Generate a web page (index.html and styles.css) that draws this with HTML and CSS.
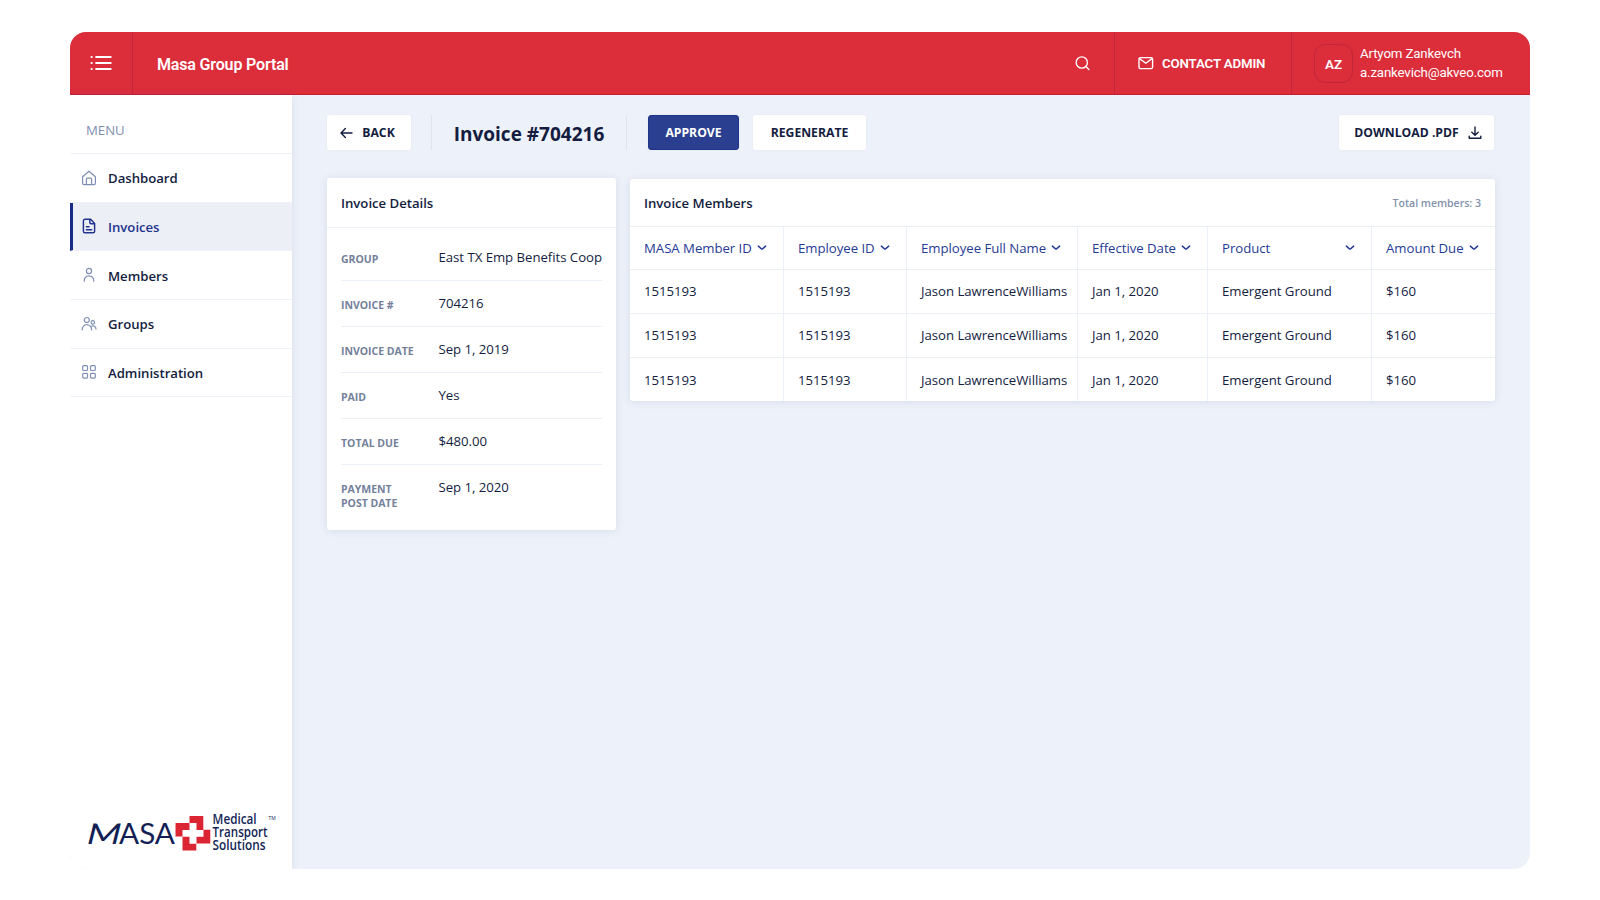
FILE: index.html
```html
<!DOCTYPE html>
<html lang="en">
  <head>
    <meta charset="UTF-8" />
    <title>Masa Group Portal</title>
    <link rel="stylesheet" href="styles.css" />
  </head>
  <body>
    <!-- arrow used in every table heading -->
    <svg width="0" height="0" class="defs">
      <symbol id="chevron" viewBox="0 0 10 6">
        <path d="M1.3 1.1L4.5 3.9Q5 4.3 5.5 3.9L8.7 1.1" />
      </symbol>
    </svg>

    <div class="app">
      <header class="header">
        <button class="menu-toggle">
          <svg width="22" height="16" viewBox="0 0 22 16">
            <path class="lines" d="M6.2 2h14.4M6.2 8h14.4M6.2 14h14.4" />
            <path class="lines" d="M1.6 2h.1M1.6 8h.1M1.6 14h.1" />
          </svg>
        </button>
        <div class="brand">Masa Group Portal</div>
        <div class="search">
          <svg width="16" height="16" viewBox="0 0 16 16">
            <circle cx="7.8" cy="7.5" r="5.6" />
            <path d="M11.9 11.6l3 2.8" />
          </svg>
        </div>
        <div class="contact">
          <svg width="16" height="14" viewBox="0 0 16 14">
            <rect x="1" y="1.6" width="13.6" height="11" rx="1.6" />
            <path d="M1.6 2.6l6.2 4.6 6.2-4.6" />
          </svg>
          <span>CONTACT ADMIN</span>
        </div>
        <div class="user">
          <div class="avatar">AZ</div>
          <div class="user-info">
            <div>Artyom Zankevch</div>
            <div>a.zankevich@akveo.com</div>
          </div>
        </div>
      </header>

      <div class="body">
        <aside class="sidebar">
          <div class="menu-title">MENU</div>
          <nav>
            <a class="menu-item">
              <svg width="16" height="16" viewBox="0 0 16 16">
                <path d="M1.6 6.8L8 1.2l6.4 5.6v6.4a1.4 1.4 0 0 1-1.4 1.4H3a1.4 1.4 0 0 1-1.4-1.4z" />
                <path d="M5.4 14.4V9.2a1 1 0 0 1 1-1h3.2a1 1 0 0 1 1 1v5.2" />
              </svg>
              <span>Dashboard</span>
            </a>
            <a class="menu-item active">
              <svg width="16" height="16" viewBox="0 0 16 16">
                <path d="M9.6 1.2H4a1.6 1.6 0 0 0-1.6 1.6v10.4A1.6 1.6 0 0 0 4 14.8h8a1.6 1.6 0 0 0 1.6-1.6V5.4z" />
                <path d="M8.8 1.4v3.2a1.2 1.2 0 0 0 1.2 1.2h3.4M5.4 8.8h2.6M5.4 11.8h5.2" />
              </svg>
              <span>Invoices</span>
            </a>
            <a class="menu-item">
              <svg width="16" height="16" viewBox="0 0 16 16">
                <circle cx="8" cy="4" r="2.6" />
                <path d="M3.2 14.2v-.6a4.8 4.8 0 0 1 9.6 0v.6" />
              </svg>
              <span>Members</span>
            </a>
            <a class="menu-item">
              <svg width="16" height="16" viewBox="0 0 16 16">
                <circle cx="5.8" cy="4" r="2.5" />
                <path d="M1.2 14v-.6a4.7 4.7 0 0 1 9.4 0v.6" />
                <circle cx="11.8" cy="6.4" r="1.7" />
                <path d="M10.4 10.2a3.2 3.2 0 0 1 4.6 2.8" />
              </svg>
              <span>Groups</span>
            </a>
            <a class="menu-item">
              <svg width="16" height="16" viewBox="0 0 16 16">
                <rect x="1.7" y="1.7" width="4.8" height="4.8" rx="1" />
                <rect x="9.5" y="1.7" width="4.8" height="4.8" rx="1" />
                <rect x="1.7" y="9.3" width="4.8" height="4.8" rx="1" />
                <rect x="9.5" y="9.3" width="4.8" height="4.8" rx="1" />
              </svg>
              <span>Administration</span>
            </a>
          </nav>

          <svg class="logo" width="192" height="44" viewBox="0 0 192 44">
            <g class="logo-name">
              <text x="0" y="0" textLength="34" lengthAdjust="spacingAndGlyphs" transform="translate(0 34.5) skewX(-14)">M</text>
              <text x="34" y="34.5" textLength="56" lengthAdjust="spacingAndGlyphs">ASA</text>
            </g>
            <path class="cross-red" d="M104.5 7h13.8v13.8h7v13.8h-14v7H97.5V27.6h-7V14h14z" />
            <path class="cross-white" d="M104.5 14h7v6.9h7v6.9h-7v7h-7v-7h-7v-6.9h7z" />
            <g class="logo-sub">
              <text x="127.6" y="15" textLength="44" lengthAdjust="spacingAndGlyphs">Medical</text>
              <text x="127.6" y="27.8" textLength="55" lengthAdjust="spacingAndGlyphs">Transport</text>
              <text x="127.6" y="40.8" textLength="53" lengthAdjust="spacingAndGlyphs">Solutions</text>
            </g>
            <text class="logo-tm" x="183.5" y="11">TM</text>
          </svg>
        </aside>

        <main class="content">
          <div class="toolbar">
            <button class="btn back">
              <svg width="13" height="12" viewBox="0 0 13 12">
                <path d="M12 6H1.2M5.4 1.4L1 6l4.4 4.6" />
              </svg>
              <span>BACK</span>
            </button>
            <h1 class="page-title">Invoice #704216</h1>
            <button class="btn primary">APPROVE</button>
            <button class="btn regenerate">REGENERATE</button>
            <button class="btn download">
              <span>DOWNLOAD .PDF</span>
              <svg width="14" height="14" viewBox="0 0 14 14">
                <path d="M7 1v8M3.8 6.2L7 9.2l3.2-3M1.2 10.2v2h11.6v-2" />
              </svg>
            </button>
          </div>

          <div class="cards">
            <section class="card details">
              <h2>Invoice Details</h2>
              <dl>
                <div class="row"><dt>GROUP</dt><dd>East TX Emp Benefits Coop</dd></div>
                <div class="row"><dt>INVOICE #</dt><dd>704216</dd></div>
                <div class="row"><dt>INVOICE DATE</dt><dd>Sep 1, 2019</dd></div>
                <div class="row"><dt>PAID</dt><dd>Yes</dd></div>
                <div class="row"><dt>TOTAL DUE</dt><dd>$480.00</dd></div>
                <div class="row"><dt>PAYMENT<br />POST DATE</dt><dd>Sep 1, 2020</dd></div>
              </dl>
            </section>

            <section class="card members">
              <div class="card-head">
                <h2>Invoice Members</h2>
                <span class="total">Total members: 3</span>
              </div>
              <div class="tr th">
                <div><span>MASA Member ID</span><svg><use href="#chevron" /></svg></div>
                <div><span>Employee ID</span><svg><use href="#chevron" /></svg></div>
                <div><span>Employee Full Name</span><svg><use href="#chevron" /></svg></div>
                <div><span>Effective Date</span><svg><use href="#chevron" /></svg></div>
                <div><span>Product</span><svg><use href="#chevron" /></svg></div>
                <div><span>Amount Due</span><svg><use href="#chevron" /></svg></div>
              </div>
              <div class="tr">
                <div>1515193</div><div>1515193</div><div>Jason LawrenceWilliams</div>
                <div>Jan 1, 2020</div><div>Emergent Ground</div><div>$160</div>
              </div>
              <div class="tr">
                <div>1515193</div><div>1515193</div><div>Jason LawrenceWilliams</div>
                <div>Jan 1, 2020</div><div>Emergent Ground</div><div>$160</div>
              </div>
              <div class="tr">
                <div>1515193</div><div>1515193</div><div>Jason LawrenceWilliams</div>
                <div>Jan 1, 2020</div><div>Emergent Ground</div><div>$160</div>
              </div>
            </section>
          </div>
        </main>
      </div>
    </div>
  </body>
</html>
```
FILE: styles.css
```css
* {
  box-sizing: border-box;
}

body {
  margin: 0;
  padding: 32px 70px 31px;
  height: 900px;
  background: #fff;
  font-family: "Open Sans", "Noto Sans", sans-serif;
  font-size: 13.2px;
  letter-spacing: -0.03px;
  color: #141d3f;
  overflow: hidden;
}

button {
  font-family: inherit;
  border: none;
  padding: 0;
  cursor: pointer;
}

svg {
  fill: none;
  stroke: currentColor;
  stroke-linecap: round;
  stroke-linejoin: round;
  flex-shrink: 0;
}

h1,
h2,
dl,
dd {
  margin: 0;
}

.defs {
  display: none;
}

.app {
  display: flex;
  flex-direction: column;
  height: 837px;
  border-radius: 16px;
  overflow: hidden;
  background: #edf1f9;
}

/* Header */
.header {
  display: flex;
  height: 63px;
  flex-shrink: 0;
  background: #dc2d3b;
  border-bottom: 1px solid #c51f32;
  color: #fff;
  font-family: Roboto, sans-serif;
  letter-spacing: -0.16px;
}

.menu-toggle {
  width: 62.5px;
  padding-top: 3px;
  border-right: 1px solid #c12639;
  background: none;
  color: #fff;
}

.lines {
  stroke-width: 2.2;
}

.brand {
  flex: 1;
  padding-left: 24.5px;
  line-height: 65px;
  font-size: 16px;
  font-weight: 600;
}

.search {
  display: flex;
  align-items: center;
  width: 40px;
  stroke-width: 1.4;
}

.contact {
  display: flex;
  align-items: center;
  gap: 8px;
  width: 178px;
  padding-left: 23px;
  border-left: 1px solid #c12639;
  border-right: 1px solid #c12639;
  font-size: 13.3px;
  font-weight: 600;
  stroke-width: 1.4;
}

.contact span {
  padding-top: 1px;
}

.user {
  display: flex;
  align-items: center;
  width: 238px;
  padding-left: 22px;
}

.avatar {
  width: 39px;
  height: 39px;
  margin-right: 7px;
  border: 1px solid #c12639;
  border-radius: 11px;
  line-height: 38px;
  text-align: center;
  font-size: 13.5px;
  font-weight: 600;
}

.user-info {
  margin-top: -1px;
  font-size: 13.3px;
  line-height: 19px;
}

/* Sidebar */
.body {
  display: flex;
  flex: 1;
}

.sidebar {
  display: flex;
  flex-direction: column;
  width: 222px;
  background: #fff;
  box-shadow: 0 0 8px rgba(60, 90, 150, 0.12);
}

.menu-title {
  height: 59px;
  padding-left: 16px;
  border-bottom: 1px solid #eff2f8;
  line-height: 70px;
  color: #7f8fb0;
}

.menu-item {
  display: flex;
  align-items: center;
  gap: 11px;
  height: 48.65px;
  padding-left: 11px;
  border-bottom: 1px solid #eff2f8;
  font-weight: 600;
}

.menu-item span {
  padding-top: 1px;
}

.menu-item svg {
  color: #7f8fb4;
  stroke-width: 1.2;
}

.menu-item.active {
  padding-left: 8px;
  border-left: 3px solid #172b85;
  background: #edeff6;
  color: #21358f;
}

.menu-item.active svg {
  color: #21358f;
  stroke-width: 1.5;
}

.logo {
  margin: auto 0 16px 15px;
  fill: #131f55;
  stroke: none;
  letter-spacing: 0;
}

.logo-name {
  font-family: Lato, sans-serif;
  font-size: 28.5px;
}

.logo-sub {
  font-family: "Open Sans", sans-serif;
  font-size: 13.6px;
  font-weight: 600;
}

.logo-tm {
  font-size: 5px;
}

.cross-red {
  fill: #dc2532;
}

.cross-white {
  fill: #fff;
}

/* Toolbar */
.content {
  flex: 1;
  padding: 20px 35px 0;
}

.toolbar {
  display: flex;
  height: 35px;
  letter-spacing: 0;
}

.btn {
  display: flex;
  align-items: center;
  justify-content: center;
  height: 35px;
  border-radius: 3px;
  background: #fff;
  color: #141d3f;
  font-size: 12.2px;
  font-weight: 700;
  box-shadow: 0 0 3px rgba(120, 140, 180, 0.08);
}

.btn svg {
  stroke-width: 1.4;
}

.back {
  gap: 9px;
  width: 84px;
  padding-right: 3px;
}

.page-title {
  width: 196px;
  margin: 0 21px 0 20px;
  border-left: 1px solid #dfe4ee;
  border-right: 1px solid #dfe4ee;
  text-align: center;
  line-height: 38px;
  font-size: 19px;
  font-weight: 700;
}

.primary {
  width: 91px;
  border: 1px solid #20348a;
  background: #2a3f8f;
  color: #fff;
}

.regenerate {
  width: 113px;
  margin-left: 14px;
}

.download {
  gap: 9px;
  width: 155px;
  padding-left: 3px;
  margin-left: auto;
  margin-right: 1px;
}

/* Cards */
.cards {
  display: flex;
  align-items: flex-start;
  gap: 14px;
  padding-top: 28px;
}

.card {
  border-radius: 3px;
  background: #fff;
  box-shadow: 0 1px 9px rgba(50, 80, 140, 0.12);
}

.card h2 {
  font-size: 13.2px;
  font-weight: 600;
}

.details {
  width: 289px;
  height: 352px;
}

.details h2 {
  height: 50px;
  padding-left: 14px;
  border-bottom: 1px solid #eef2f9;
  line-height: 50px;
}

.details dl {
  padding: 7px 14px 0;
}

.row {
  display: flex;
  height: 46px;
  padding-top: 14px;
  border-bottom: 1px solid #eaeff8;
}

.row:last-child {
  height: auto;
  border: none;
}

dt {
  flex: 0 0 97.5px;
  padding-top: 3px;
  line-height: 14px;
  font-size: 10.5px;
  font-weight: 700;
  color: #75819b;
}

dd {
  line-height: 17px;
  white-space: nowrap;
}

.members {
  width: 865px;
  margin-top: 1px;
}

.card-head {
  display: flex;
  align-items: center;
  justify-content: space-between;
  height: 48px;
  padding: 0 14px;
  border-bottom: 1px solid #eaeff8;
}

.total {
  font-size: 10.6px;
  font-weight: 600;
  color: #8391ad;
}

.tr {
  display: grid;
  grid-template-columns: 154px 123px 171px 130px 164px 123px;
  height: 44.2px;
  border-bottom: 1px solid #eaeff8;
}

.tr:last-child {
  height: 43.4px;
  border: none;
}

.tr > div {
  display: flex;
  align-items: center;
  justify-content: space-between;
  padding: 0 16px 0 14px;
  border-right: 1px solid #eaeff8;
  white-space: nowrap;
}

.tr > div:last-child {
  border: none;
}

.tr.th {
  height: 42.6px;
  color: #263b95;
}

.th svg {
  width: 10px;
  height: 6px;
  stroke-width: 1.4;
}
```
